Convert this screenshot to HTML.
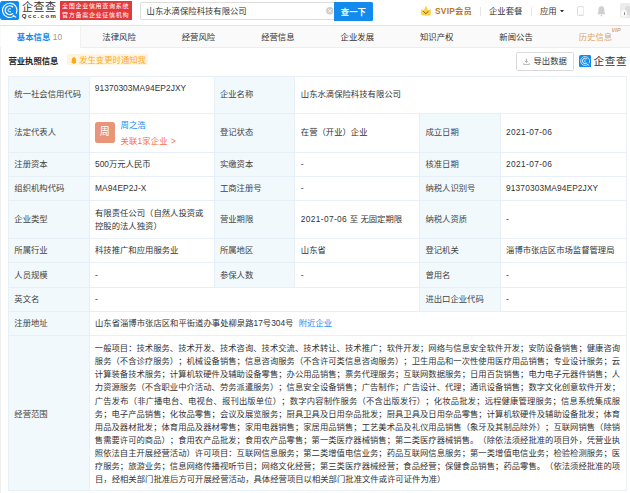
<!DOCTYPE html>
<html lang="zh-CN">
<head>
<meta charset="utf-8">
<title>山东水滴保险科技有限公司 - 企查查</title>
<style>
html,body{margin:0;padding:0;}
body{width:630px;height:493px;overflow:hidden;position:relative;background:#fff;
 font-family:"Liberation Sans","Noto Sans CJK SC",sans-serif;font-size:8.4px;line-height:13.2px;color:#333;}
.b{position:absolute;}
.t{position:absolute;white-space:nowrap;text-spacing-trim:space-all;font-kerning:none;font-size:8.36px;line-height:13.2px;color:#333;}
.lb{color:#444;}
.lk{color:#128bed;}
.og{color:#fd6d3f;}
.sc{text-align:justify;text-align-last:justify;white-space:nowrap;}
.av{background:#e8957a;border-radius:2.5px;color:#fff;font-size:10px;line-height:19.6px;text-align:center;}
.nav{position:absolute;top:26.6px;height:21.5px;line-height:21.5px;text-align:center;font-size:8.4px;color:#333;white-space:nowrap;}
</style>
</head>
<body>
<!-- page gutter -->
<div class="b" style="left:0;top:25px;width:1.2px;height:468px;background:#f0f0f0;"></div>

<!-- header -->
<div class="b" style="left:0;top:0;width:630px;height:24.6px;background:#fff;border-bottom:1px solid #e3e3e3;"></div>
<svg class="b" style="left:-0.3px;top:1px;" width="19.5" height="19.1" viewBox="0 0 100 100" preserveAspectRatio="none">
  <rect x="0" y="0" width="100" height="100" rx="15" fill="#128bed"/>
  <path d="M71.2 79.3 A37 37 0 1 1 83.5 64.6" fill="none" stroke="#fff" stroke-width="5.5" stroke-linecap="round"/>
  <path d="M68 75.5 L81 84.5" fill="none" stroke="#fff" stroke-width="6" stroke-linecap="round"/>
  <path d="M64.8 30.8 A23 23 0 1 0 64.8 66" fill="none" stroke="#fff" stroke-width="7" stroke-linecap="round"/>
  <path d="M54.5 40.6 A9 9 0 1 0 54.5 56.2" fill="none" stroke="#fff" stroke-width="5" stroke-linecap="round"/>
</svg>
<div class="t" style="left:22.1px;top:0.6px;font-size:11px;line-height:13.6px;letter-spacing:0.45px;color:#333;">企查查</div>
<div class="t" style="left:21.8px;top:12.4px;font-size:6.1px;line-height:8px;letter-spacing:1.4px;font-weight:bold;color:#333;">Qcc.com</div>
<div class="b" style="left:59.8px;top:1.3px;width:72.3px;height:18.3px;background:#e4393c;"></div>
<div class="t" style="left:62px;top:1.9px;font-size:6.1px;line-height:8.8px;letter-spacing:0.63px;color:#fff;">全国企业信用查询系统<br>官方备案企业征信机构</div>

<div class="b" style="left:140px;top:2px;width:195px;height:16px;border:1px solid #ddd;border-radius:2px 0 0 2px;background:#fff;"></div>
<div class="t" style="left:146.6px;top:5px;">山东水滴保险科技有限公司</div>
<svg class="b" style="left:325.9px;top:7.4px;" width="7.6" height="7.6" viewBox="0 0 16 16">
  <circle cx="8" cy="8" r="8" fill="#cfcfcf"/>
  <path d="M5 5 L11 11 M11 5 L5 11" stroke="#fff" stroke-width="1.6" stroke-linecap="round"/>
</svg>
<div class="b" style="left:333.9px;top:1.9px;width:39px;height:19.4px;background:#128bed;border-radius:0 1.5px 1.5px 0;"></div>
<div class="t" style="left:333.9px;top:5.8px;width:39px;text-align:center;color:#fff;font-weight:bold;font-size:8.4px;">查一下</div>

<svg class="b" style="left:420.8px;top:6px;" width="10.1" height="9.5" viewBox="0 0 100 95">
  <path d="M4 32 L28 47 L50 3 L72 47 L96 32 L96 82 Q96 92 86 92 L14 92 Q4 92 4 82 Z" fill="#fad24e" stroke="#fad24e" stroke-width="5" stroke-linejoin="round"/>
  <path d="M24 54 L48 77 L73 54" fill="none" stroke="#8c5a12" stroke-width="10" stroke-linecap="round" stroke-linejoin="round"/>
</svg>
<div class="t" style="left:435px;top:5px;font-weight:bold;letter-spacing:0.25px;color:#b9771a;">SVIP会员</div>
<div class="b" style="left:479.5px;top:6.5px;width:0.8px;height:9px;background:#e5e5e5;"></div>
<div class="t" style="left:489px;top:5px;">企业套餐</div>
<div class="b" style="left:531px;top:6.5px;width:0.8px;height:9px;background:#e5e5e5;"></div>
<div class="t" style="left:540px;top:5px;">应用</div>
<svg class="b" style="left:560.2px;top:9.9px;" width="4" height="2.6" viewBox="0 0 8 5"><path d="M0 0 L8 0 L4 5 Z" fill="#333"/></svg>
<!-- phone -->
<svg class="b" style="left:576.6px;top:6px;" width="7.4" height="10.2" viewBox="0 0 15 20">
  <rect x="1" y="1" width="13" height="18" rx="2" fill="none" stroke="#d2d2d2" stroke-width="1.6"/>
  <path d="M5.5 16.3 L9.5 16.3" stroke="#d2d2d2" stroke-width="1.4"/>
</svg>
<!-- bell -->
<svg class="b" style="left:597px;top:6px;" width="8.8" height="10.6" viewBox="0 0 18 22">
  <path d="M9 0.5 C4 0.5 2.8 5 2.8 9 L2.8 12.5 L0.5 17 L17.5 17 L15.2 12.5 L15.2 9 C15.2 5 14 0.5 9 0.5 Z" fill="#cfcfcf"/>
  <circle cx="9" cy="19.5" r="1.8" fill="#cfcfcf"/>
</svg>
<!-- avatar -->
<div class="b" style="left:619.5px;top:3.3px;width:14.6px;height:15px;background:#ececec;border-radius:2px;"></div>
<div class="b" style="left:625px;top:5.5px;width:6px;height:9px;border-radius:3px;background:#dcdcdc;"></div>
<div class="b" style="left:621px;top:10.4px;width:6.4px;height:6.4px;border-radius:3.2px;background:#fbfbfb;"></div>
<div class="b" style="left:623.6px;top:11.8px;width:1.6px;height:3.4px;border-radius:0.8px;background:#8a8a8a;"></div>

<!-- nav -->
<div class="b" style="left:0;top:25.6px;width:630px;height:21.4px;background:#fafafa;border-bottom:1px solid #ededed;"></div>
<div class="b" style="left:1.2px;top:25.6px;width:79px;height:22.4px;background:#fff;border-right:1px solid #f0f0f0;"></div>
<div class="nav" style="left:0;width:79.4px;"><b style="color:#128bed;">基本信息</b> <span style="color:#999;letter-spacing:0.3px;">10</span></div>
<div class="nav" style="left:79.4px;width:79.4px;">法律风险</div>
<div class="nav" style="left:158.8px;width:79.4px;">经营风险</div>
<div class="nav" style="left:238.2px;width:79.4px;">经营信息</div>
<div class="nav" style="left:317.6px;width:79.4px;">企业发展</div>
<div class="nav" style="left:397px;width:79.4px;">知识产权</div>
<div class="nav" style="left:476.4px;width:79.4px;">新闻公告</div>
<div class="nav" style="left:555.8px;width:79.4px;color:#dba671;">历史信息</div>
<div class="t" style="left:611.6px;top:26.4px;font-size:5.6px;line-height:8px;font-style:italic;font-weight:bold;color:#dba671;">VIP</div>

<!-- section title -->
<div class="t" style="left:8.4px;top:54.6px;font-weight:bold;color:#222;">营业执照信息</div>
<div class="b" style="left:67.1px;top:54.3px;width:80.9px;height:10.9px;background:#fff4e1;border-radius:1px;"></div>
<svg class="b" style="left:70.5px;top:56.8px;" width="5.8" height="7.3" viewBox="0 0 18 22">
  <path d="M9 0.5 C4 0.5 2.5 5 2.5 9 L2.5 14 L1 18 L17 18 L15.5 14 L15.5 9 C15.5 5 14 0.5 9 0.5 Z" fill="#ffa90c"/>
  <circle cx="9" cy="19.8" r="2" fill="#ffa90c"/>
</svg>
<div class="t" style="left:79.2px;top:54.4px;color:#ffa916;">发生变更时通知我</div>

<div class="b" style="left:516.2px;top:52.2px;width:55.4px;height:16.4px;border:1px solid #d9d9d9;border-radius:1.5px;background:#fff;"></div>
<svg class="b" style="left:523px;top:58.2px;" width="7" height="7.2" viewBox="0 0 12 13">
  <path d="M6 1 L6 8 M3.2 5.5 L6 8.3 L8.8 5.5 M1 9.5 L1 12 L11 12 L11 9.5" fill="none" stroke="#999" stroke-width="1.3"/>
</svg>
<div class="t" style="left:533.5px;top:55.4px;">导出数据</div>
<svg class="b" style="left:579.1px;top:54.7px;" width="12.3" height="12.3" viewBox="0 0 100 100">
  <rect x="0" y="0" width="100" height="100" rx="15" fill="#128bed"/>
  <path d="M71.2 79.3 A37 37 0 1 1 83.5 64.6" fill="none" stroke="#fff" stroke-width="5.5" stroke-linecap="round"/>
  <path d="M68 75.5 L81 84.5" fill="none" stroke="#fff" stroke-width="6" stroke-linecap="round"/>
  <path d="M64.8 30.8 A23 23 0 1 0 64.8 66" fill="none" stroke="#fff" stroke-width="7" stroke-linecap="round"/>
  <path d="M54.5 40.6 A9 9 0 1 0 54.5 56.2" fill="none" stroke="#fff" stroke-width="5" stroke-linecap="round"/>
</svg>
<div class="t" style="left:593.4px;top:54.7px;font-size:10.7px;line-height:13.2px;letter-spacing:0.6px;color:#333;">企查查</div>

<!-- table -->
<div class="b" style="left:8.20px;top:76.00px;width:81.50px;height:414.00px;background:#f2f9fc"></div>
<div class="b" style="left:214.30px;top:76.00px;width:80.40px;height:211.00px;background:#f2f9fc"></div>
<div class="b" style="left:419.50px;top:113.00px;width:81.30px;height:198.00px;background:#f2f9fc"></div>
<div class="b" style="left:8.00px;top:76.00px;width:619.00px;height:1.00px;background:#e7f0f7"></div>
<div class="b" style="left:8.00px;top:113.00px;width:619.00px;height:1.00px;background:#e7f0f7"></div>
<div class="b" style="left:8.00px;top:152.00px;width:619.00px;height:1.00px;background:#e7f0f7"></div>
<div class="b" style="left:8.00px;top:176.00px;width:619.00px;height:1.00px;background:#e7f0f7"></div>
<div class="b" style="left:8.00px;top:200.00px;width:619.00px;height:1.00px;background:#e7f0f7"></div>
<div class="b" style="left:8.00px;top:238.00px;width:619.00px;height:1.00px;background:#e7f0f7"></div>
<div class="b" style="left:8.00px;top:262.00px;width:619.00px;height:1.00px;background:#e7f0f7"></div>
<div class="b" style="left:8.00px;top:287.00px;width:619.00px;height:1.00px;background:#e7f0f7"></div>
<div class="b" style="left:8.00px;top:311.00px;width:619.00px;height:1.00px;background:#e7f0f7"></div>
<div class="b" style="left:8.00px;top:335.00px;width:619.00px;height:1.00px;background:#e7f0f7"></div>
<div class="b" style="left:8.00px;top:490.00px;width:619.00px;height:1.00px;background:#e7f0f7"></div>
<div class="b" style="left:8.00px;top:76.00px;width:1.00px;height:415.00px;background:#e7f0f7"></div>
<div class="b" style="left:626.00px;top:76.00px;width:1.00px;height:415.00px;background:#e7f0f7"></div>
<div class="b" style="left:89.00px;top:76.00px;width:1.00px;height:415.00px;background:#e7f0f7"></div>
<div class="b" style="left:214.00px;top:76.00px;width:1.00px;height:212.00px;background:#e7f0f7"></div>
<div class="b" style="left:294.00px;top:76.00px;width:1.00px;height:212.00px;background:#e7f0f7"></div>
<div class="b" style="left:419.00px;top:113.00px;width:1.00px;height:199.00px;background:#e7f0f7"></div>
<div class="b" style="left:500.00px;top:113.00px;width:1.00px;height:199.00px;background:#e7f0f7"></div>
<div class="t lb" style="left:14.30px;top:88.00px;">统一社会信用代码</div>
<div class="t lb" style="left:14.30px;top:126.00px;">法定代表人</div>
<div class="t lb" style="left:14.30px;top:158.00px;">注册资本</div>
<div class="t lb" style="left:14.30px;top:182.40px;">组织机构代码</div>
<div class="t lb" style="left:14.30px;top:213.00px;">企业类型</div>
<div class="t lb" style="left:14.30px;top:244.00px;">所属行业</div>
<div class="t lb" style="left:14.30px;top:269.00px;">人员规模</div>
<div class="t lb" style="left:14.30px;top:293.00px;">英文名</div>
<div class="t lb" style="left:14.30px;top:317.00px;">注册地址</div>
<div class="t lb" style="left:14.30px;top:408.00px;">经营范围</div>
<div class="t lb" style="left:219.90px;top:88.00px;">企业名称</div>
<div class="t lb" style="left:219.90px;top:126.00px;">登记状态</div>
<div class="t lb" style="left:219.90px;top:158.00px;">实缴资本</div>
<div class="t lb" style="left:219.90px;top:182.40px;">工商注册号</div>
<div class="t lb" style="left:219.90px;top:213.00px;">营业期限</div>
<div class="t lb" style="left:219.90px;top:244.00px;">所属地区</div>
<div class="t lb" style="left:219.90px;top:269.00px;">参保人数</div>
<div class="t lb" style="left:425.40px;top:126.00px;">成立日期</div>
<div class="t lb" style="left:425.40px;top:158.00px;">核准日期</div>
<div class="t lb" style="left:425.40px;top:182.40px;">纳税人识别号</div>
<div class="t lb" style="left:425.40px;top:213.00px;">纳税人资质</div>
<div class="t lb" style="left:425.40px;top:244.00px;">登记机关</div>
<div class="t lb" style="left:425.40px;top:269.00px;">曾用名</div>
<div class="t lb" style="left:425.40px;top:293.00px;">进出口企业代码</div>
<div class="t " style="left:94.80px;top:82.00px;letter-spacing:0.08px;">91370303MA94EP2JXY</div>
<div class="t " style="left:300.80px;top:88.00px;">山东水滴保险科技有限公司</div>
<div class="b av" style="left:94.5px;top:122px;width:20.7px;height:20.8px;">周</div>
<div class="t lk" style="left:120.60px;top:119.00px;">周之浩</div>
<div class="t og" style="left:120.60px;top:135.00px;letter-spacing:0.15px;word-spacing:0.6px;">关联1家企业 &gt;</div>
<div class="t " style="left:300.80px;top:126.00px;">在营（开业）企业</div>
<div class="t " style="left:506.10px;top:126.00px;letter-spacing:0.36px;">2021-07-06</div>
<div class="t " style="left:95.00px;top:158.00px;">500万元人民币</div>
<div class="t " style="left:300.80px;top:158.00px;">-</div>
<div class="t " style="left:506.10px;top:158.00px;letter-spacing:0.36px;">2021-07-06</div>
<div class="t " style="left:95.00px;top:182.40px;letter-spacing:0.15px;">MA94EP2J-X</div>
<div class="t " style="left:300.80px;top:182.40px;">-</div>
<div class="t " style="left:506.10px;top:182.40px;letter-spacing:0.12px;">91370303MA94EP2JXY</div>
<div class="t " style="left:95.00px;top:207.00px;">有限责任公司（自然人投资或</div>
<div class="t " style="left:95.00px;top:220.00px;">控股的法人独资）</div>
<div class="t " style="left:300.80px;top:213.00px;"><span style="letter-spacing:0.36px;">2021-07-06 </span>至 无固定期限</div>
<div class="t " style="left:506.10px;top:213.00px;">-</div>
<div class="t " style="left:95.00px;top:244.00px;">科技推广和应用服务业</div>
<div class="t " style="left:300.80px;top:244.00px;">山东省</div>
<div class="t " style="left:506.10px;top:244.00px;">淄博市张店区市场监督管理局</div>
<div class="t " style="left:95.00px;top:269.00px;">-</div>
<div class="t " style="left:300.80px;top:269.00px;">-</div>
<div class="t " style="left:506.10px;top:269.00px;">-</div>
<div class="t " style="left:95.00px;top:293.00px;">-</div>
<div class="t " style="left:506.10px;top:293.00px;">-</div>
<div class="t " style="left:95.00px;top:317.00px;">山东省淄博市张店区和平街道办事处柳泉路17号304号 <span class="lk" style="margin-left:3px;">附近企业</span></div>
<div class="t sc" style="left:94.80px;top:342.00px;width:525.3px;font-size:8.3px;">一般项目：技术服务、技术开发、技术咨询、技术交流、技术转让、技术推广；软件开发；网络与信息安全软件开发；安防设备销售；健康咨询</div>
<div class="t sc" style="left:94.80px;top:355.00px;width:525.3px;font-size:8.3px;">服务（不含诊疗服务）；机械设备销售；信息咨询服务（不含许可类信息咨询服务）；卫生用品和一次性使用医疗用品销售；专业设计服务；云</div>
<div class="t sc" style="left:94.80px;top:368.00px;width:525.3px;font-size:8.3px;">计算装备技术服务；计算机软硬件及辅助设备零售；办公用品销售；票务代理服务；互联网数据服务；日用百货销售；电力电子元器件销售；人</div>
<div class="t sc" style="left:94.80px;top:381.00px;width:525.3px;font-size:8.3px;">力资源服务（不含职业中介活动、劳务派遣服务）；信息安全设备销售；广告制作；广告设计、代理；通讯设备销售；数字文化创意软件开发；</div>
<div class="t sc" style="left:94.80px;top:395.00px;width:525.3px;font-size:8.3px;">广告发布（非广播电台、电视台、报刊出版单位）；数字内容制作服务（不含出版发行）；化妆品批发；远程健康管理服务；信息系统集成服</div>
<div class="t sc" style="left:94.80px;top:408.00px;width:525.3px;font-size:8.3px;">务；电子产品销售；化妆品零售；会议及展览服务；厨具卫具及日用杂品批发；厨具卫具及日用杂品零售；计算机软硬件及辅助设备批发；体育</div>
<div class="t sc" style="left:94.80px;top:421.00px;width:525.3px;font-size:8.3px;">用品及器材批发；体育用品及器材零售；家用电器销售；家居用品销售；工艺美术品及礼仪用品销售（象牙及其制品除外）；互联网销售（除销</div>
<div class="t sc" style="left:94.80px;top:434.00px;width:525.3px;font-size:8.3px;">售需要许可的商品）；食用农产品批发；食用农产品零售；第一类医疗器械销售；第二类医疗器械销售。（除依法须经批准的项目外，凭营业执</div>
<div class="t sc" style="left:94.80px;top:447.00px;width:525.3px;font-size:8.3px;">照依法自主开展经营活动）许可项目：互联网信息服务；第二类增值电信业务；药品互联网信息服务；第一类增值电信业务；检验检测服务；医</div>
<div class="t sc" style="left:94.80px;top:460.00px;width:525.3px;font-size:8.3px;">疗服务；旅游业务；信息网络传播视听节目；网络文化经营；第三类医疗器械经营；食品经营；保健食品销售；药品零售。（依法须经批准的项</div>
<div class="t " style="left:95.00px;top:473.00px;">目，经相关部门批准后方可开展经营活动，具体经营项目以相关部门批准文件或许可证件为准）</div>
</body>
</html>
